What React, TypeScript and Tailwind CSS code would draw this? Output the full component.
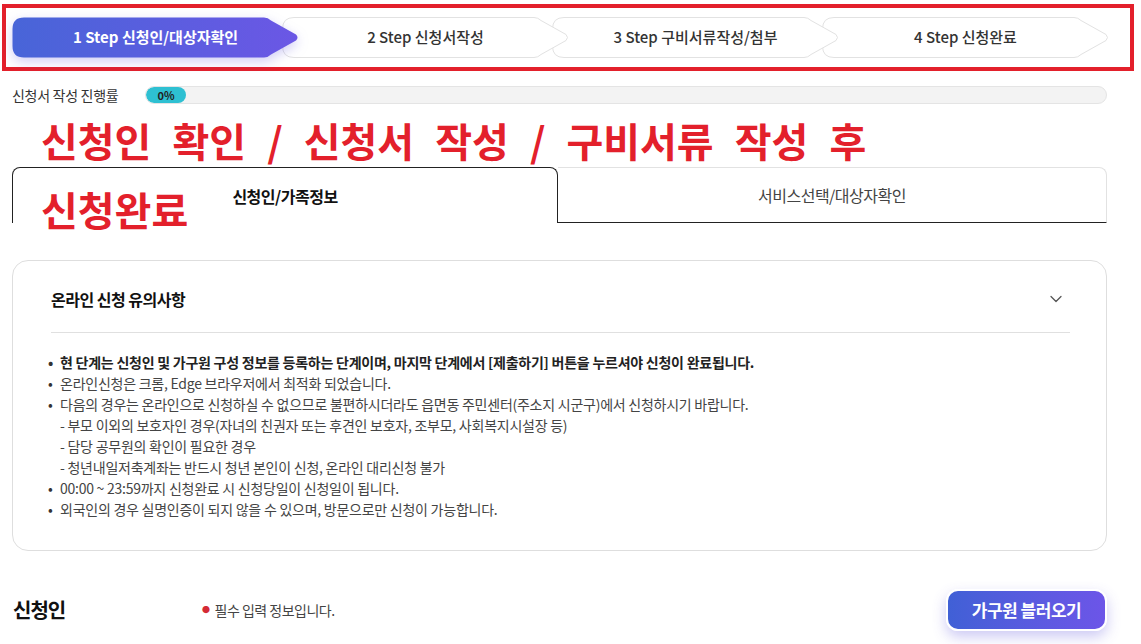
import React from "react";
import { ChevronDown } from "lucide-react";

const steps = [
  { no: 1, label: "신청인/대상자확인" },
  { no: 2, label: "신청서작성" },
  { no: 3, label: "구비서류작성/첨부" },
  { no: 4, label: "신청완료" },
];

// arrow-shaped step background, 287 x 41
const STEP_PATH =
  "M12 0.5 H252 Q256 0.5 259 3.5 L284 17.5 Q287 20.5 284 23.5 L259 37.5 Q256 40.5 252 40.5 H12 Q0.5 40.5 0.5 29 V12 Q0.5 0.5 12 0.5 Z";

function Step({ no, label, active, z }: { no: number; label: string; active: boolean; z: string }) {
  return (
    <div className={`relative h-[41px] w-[287px] shrink-0 ${no > 1 ? "-ml-[17px]" : ""} ${z}`}>
      <svg
        className={`absolute inset-0 ${active ? "drop-shadow-[0_4px_6px_rgba(90,80,220,0.28)]" : ""}`}
        width="287"
        height="41"
        viewBox="0 0 287 41"
      >
        <defs>
          <linearGradient id="stepGrad" x1="0" y1="0" x2="1" y2="0">
            <stop offset="0" stopColor="#4865d8" />
            <stop offset="1" stopColor="#6b57e5" />
          </linearGradient>
        </defs>
        {active ? (
          <path d={STEP_PATH} fill="url(#stepGrad)" />
        ) : (
          <path d={STEP_PATH} fill="#ffffff" stroke="#e2e2e2" strokeWidth="1" />
        )}
      </svg>
      <div
        className={`relative flex h-full items-center justify-center text-[15px] ${
          active ? "font-bold text-white" : "font-medium text-[#333]"
        }`}
      >
        {no} Step {label}
      </div>
    </div>
  );
}

const notes: { text: string; bullet: boolean; bold?: boolean }[] = [
  { text: "현 단계는 신청인 및 가구원 구성 정보를 등록하는 단계이며, 마지막 단계에서 [제출하기] 버튼을 누르셔야 신청이 완료됩니다.", bullet: true, bold: true },
  { text: "온라인신청은 크롬, Edge 브라우저에서 최적화 되었습니다.", bullet: true },
  { text: "다음의 경우는 온라인으로 신청하실 수 없으므로 불편하시더라도 읍면동 주민센터(주소지 시군구)에서 신청하시기 바랍니다.", bullet: true },
  { text: "- 부모 이외의 보호자인 경우(자녀의 친권자 또는 후견인 보호자, 조부모, 사회복지시설장 등)", bullet: false },
  { text: "- 담당 공무원의 확인이 필요한 경우", bullet: false },
  { text: "- 청년내일저축계좌는 반드시 청년 본인이 신청, 온라인 대리신청 불가", bullet: false },
  { text: "00:00 ~ 23:59까지 신청완료 시 신청당일이 신청일이 됩니다.", bullet: true },
  { text: "외국인의 경우 실명인증이 되지 않을 수 있으며, 방문으로만 신청이 가능합니다.", bullet: true },
];

export default function App() {
  const zs = ["z-40", "z-30", "z-20", "z-10"];

  return (
    <div className="relative h-[644px] w-[1141px] overflow-hidden bg-white font-['Noto_Sans_CJK_KR','Noto_Sans',sans-serif] text-[#333]">
      <div className="pl-[12px] pr-[34px]">
        {/* stepper */}
        <div className="flex pt-[17px]">
          {steps.map((s, i) => (
            <Step key={s.no} no={s.no} label={s.label} active={i === 0} z={zs[i]} />
          ))}
        </div>

        {/* progress */}
        <div className="mt-[28px] flex h-[18px] items-center">
          <div className="w-[133px] text-[14px] tracking-[-0.3px] text-[#333]">신청서 작성 진행률</div>
          <div className="flex h-[18px] flex-1 items-center overflow-hidden rounded-full border border-[#e4e4e4] bg-[#f3f3f3]">
            <div className="flex h-full w-[40px] items-center justify-center rounded-full bg-[#2ec0d2] text-[11px] font-bold text-[#222]">
              0%
            </div>
          </div>
        </div>

        {/* tabs */}
        <div className="mt-[63px] flex h-[56px]">
          <div className="flex w-[546px] items-center justify-center rounded-t-[8px] border border-b-0 border-[#222] text-[16px] font-bold tracking-[-0.5px] text-[#111]">
            신청인/가족정보
          </div>
          <div className="flex flex-1 items-center justify-center rounded-tr-[8px] border-t border-r border-b border-t-[#e2e2e2] border-r-[#e2e2e2] border-b-[#222] text-[16px] tracking-[-0.5px] text-[#444]">
            서비스선택/대상자확인
          </div>
        </div>

        {/* notice card */}
        <div className="mt-[37px] rounded-[16px] border border-[#dedede] pb-[30px]">
          <div className="flex h-[24px] items-center justify-between mt-[26px] pl-[38px] pr-[40px]">
            <div className="text-[16px] font-bold tracking-[-0.5px] text-[#111]">온라인 신청 유의사항</div>
            <ChevronDown className="text-[#555]" size={20} strokeWidth={1.5} />
          </div>
          <div className="ml-[38px] mr-[36px] mt-[21px] border-t border-[#e0e0e0]" />
          <ul className="mt-[19px] pl-[35px] text-[14px] leading-[21px] tracking-[-0.25px] text-[#444]">
            {notes.map((n, i) => (
              <li key={i} className={`flex ${n.bold ? "font-bold text-[#222]" : ""}`}>
                <span className="w-[12px] shrink-0 text-[#333]">{n.bullet ? "•" : ""}</span>
                <span>{n.text}</span>
              </li>
            ))}
          </ul>
        </div>

        {/* applicant header */}
        <div className="mt-[38px] flex h-[42px] items-center">
          <div className="w-[190px] pl-[1px] text-[20px] font-bold tracking-[-1px] text-[#111]">신청인</div>
          <div className="flex items-center text-[14px] tracking-[-0.5px] text-[#444]">
            <span className="mr-[5px] text-[8px] text-[#d42a35]">●</span>
            필수 입력 정보입니다.
          </div>
          <button className="ml-auto flex h-[42px] w-[161px] items-center justify-center rounded-[12px] border-2 border-white bg-gradient-to-r from-[#4060d6] to-[#6c55e8] text-[17px] font-bold tracking-[-0.5px] text-white shadow-[0_6px_14px_rgba(90,80,220,0.3)]">
            가구원 블러오기
          </button>
        </div>
      </div>

      {/* red annotation box */}
      <div className="pointer-events-none absolute left-[2px] top-[4px] h-[67px] w-[1132px] border-[4px] border-[#e3202b]" />

      {/* red annotation text */}
      <div className="pointer-events-none absolute left-[41px] top-[106px] text-[40px] font-bold leading-[69px] text-[#e3202b] [word-spacing:12px]">
        <div>신청인 확인 / 신청서 작성 / 구비서류 작성 후</div>
        <div>신청완료</div>
      </div>
    </div>
  );
}
